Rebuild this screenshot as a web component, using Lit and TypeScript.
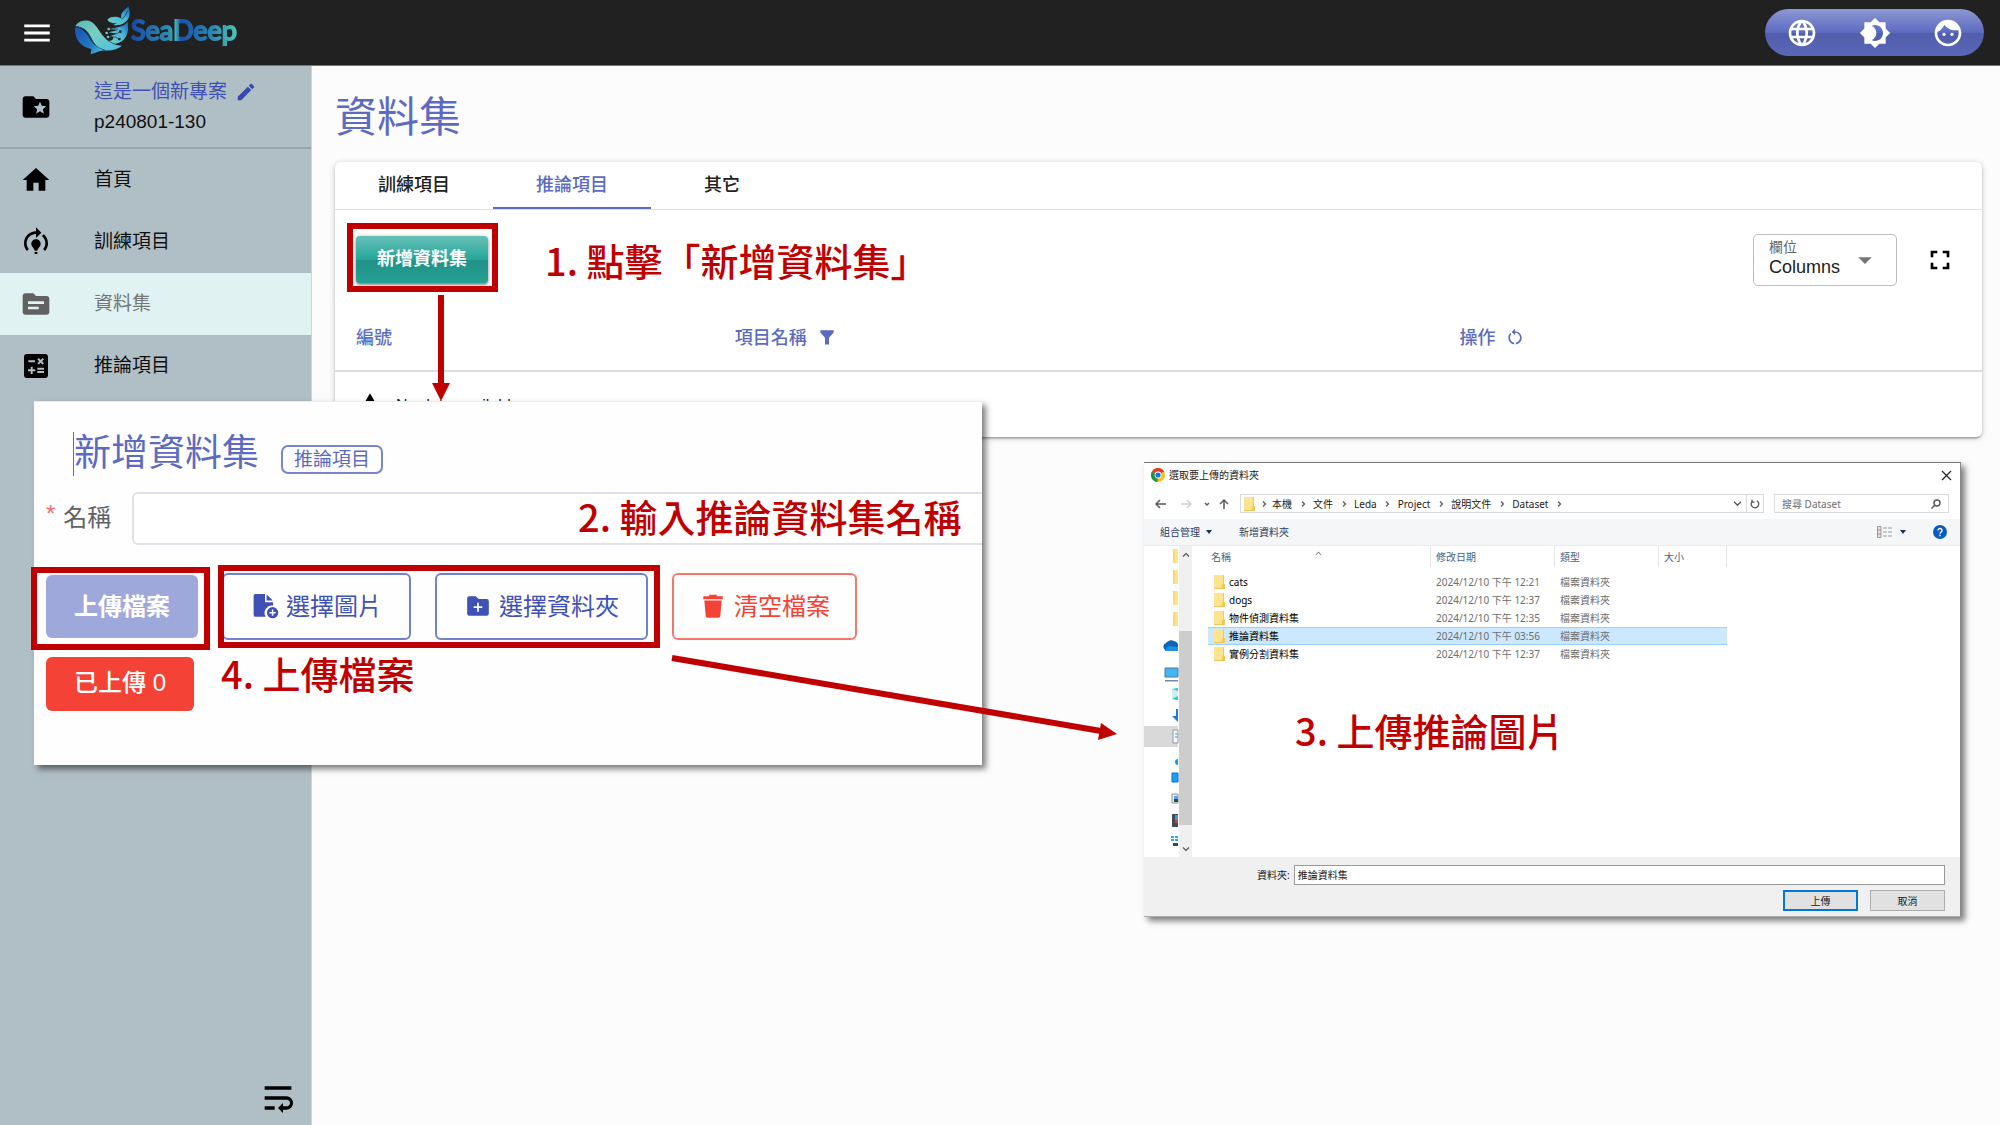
import { LitElement, html, css, svg } from "lit";
import { customElement, property } from "lit/decorators.js";
import { classMap } from "lit/directives/class-map.js";

const ICONS: Record<string, string> = {
  menu: "M3 18h18v-2H3v2zm0-5h18v-2H3v2zm0-7v2h18V6H3z",
  language:
    "M11.99 2C6.47 2 2 6.48 2 12s4.47 10 9.99 10C17.52 22 22 17.52 22 12S17.52 2 11.99 2zm6.93 6h-2.95c-.32-1.25-.78-2.45-1.38-3.56 1.84.63 3.37 1.91 4.33 3.56zM12 4.04c.83 1.2 1.48 2.53 1.91 3.96h-3.82c.43-1.43 1.08-2.76 1.91-3.96zM4.26 14C4.1 13.36 4 12.69 4 12s.1-1.36.26-2h3.38c-.08.66-.14 1.32-.14 2 0 .68.06 1.34.14 2H4.26zm.82 2h2.95c.32 1.25.78 2.45 1.38 3.56-1.84-.63-3.37-1.9-4.33-3.56zm2.95-8H5.08c.96-1.66 2.49-2.93 4.33-3.56C8.81 5.55 8.35 6.75 8.03 8zM12 19.96c-.83-1.2-1.48-2.53-1.91-3.96h3.82c-.43 1.43-1.08 2.76-1.91 3.96zM14.34 14H9.66c-.09-.66-.16-1.32-.16-2 0-.68.07-1.35.16-2h4.68c.09.65.16 1.32.16 2 0 .68-.07 1.34-.16 2zm.25 5.56c.6-1.11 1.06-2.31 1.38-3.56h2.95c-.96 1.65-2.49 2.93-4.33 3.56zM16.36 14c.08-.66.14-1.32.14-2 0-.68-.06-1.34-.14-2h3.38c.16.64.26 1.31.26 2s-.1 1.36-.26 2h-3.38z",
  brightness:
    "M20 8.69V4h-4.69L12 .69 8.69 4H4v4.69L.69 12 4 15.31V20h4.69L12 23.31 15.31 20H20v-4.69L23.31 12 20 8.69zM12 18c-.89 0-1.74-.2-2.5-.55C11.56 16.5 13 14.42 13 12s-1.44-4.5-3.5-5.45C10.26 6.2 11.11 6 12 6c3.31 0 6 2.69 6 6s-2.69 6-6 6z",
  face: "M9 11.75c-.69 0-1.25.56-1.25 1.25s.56 1.25 1.25 1.25 1.25-.56 1.25-1.25-.56-1.25-1.25-1.25zm6 0c-.69 0-1.25.56-1.25 1.25s.56 1.25 1.25 1.25 1.25-.56 1.25-1.25-.56-1.25-1.25-1.25zM12 2C6.48 2 2 6.48 2 12s4.48 10 10 10 10-4.48 10-10S17.52 2 12 2zm0 18c-4.41 0-8-3.59-8-8 0-.29.02-.58.05-.86 2.36-1.05 4.23-2.98 5.21-5.37C11.07 8.33 14.05 10 17.42 10c.78 0 1.53-.09 2.25-.26.21.71.33 1.47.33 2.26 0 4.41-3.59 8-8 8z",
  folderStar:
    "M20 6h-8l-2-2H4c-1.1 0-1.99.9-1.99 2L2 18c0 1.1.9 2 2 2h16c1.1 0 2-.9 2-2V8c0-1.1-.9-2-2-2zm-2.06 11L15 15.28 12.06 17l.78-3.33-2.59-2.24 3.41-.29L15 8l1.34 3.14 3.41.29-2.59 2.24.78 3.33z",
  edit: "M3 17.25V21h3.75L17.81 9.94l-3.75-3.75L3 17.25zM20.71 7.04c.39-.39.39-1.02 0-1.41l-2.34-2.34c-.39-.39-1.02-.39-1.41 0l-1.83 1.83 3.75 3.75 1.83-1.83z",
  home: "M10 20v-6h4v6h5v-8h3L12 3 2 12h3v8z",
  training:
    "M15.5 13.5c0 2-2.5 3.5-2.5 5h-2c0-1.5-2.5-3-2.5-5 0-1.93 1.57-3.5 3.5-3.5s3.5 1.57 3.5 3.5zm-2.5 6h-2V21h2v-1.5zm6-6.5c0 1.68-.59 3.21-1.58 4.42l1.42 1.42C20.18 17.27 21 15.23 21 13c0-2.74-1.23-5.19-3.16-6.84l-1.42 1.42C17.99 8.86 19 10.82 19 13zm-3-8l-4-4v3c-4.97 0-9 4.03-9 9 0 2.23.82 4.27 2.16 5.84l1.42-1.42C5.59 16.21 5 14.68 5 13c0-3.86 3.14-7 7-7v3l4-4z",
  source:
    "M20 6h-8l-2-2H4C2.9 4 2.01 4.9 2.01 6L2 18c0 1.1.9 2 2 2h16c1.1 0 2-.9 2-2V8c0-1.1-.9-2-2-2zM14 16H6v-2h8v2zM18 12H6v-2h12v2z",
  calculate:
    "M19 3H5c-1.1 0-2 .9-2 2v14c0 1.1.9 2 2 2h14c1.1 0 2-.9 2-2V5c0-1.1-.9-2-2-2zm-5.97 4.06L14.09 6l1.41 1.41L16.91 6l1.06 1.06-1.41 1.41 1.41 1.41-1.06 1.06-1.41-1.4-1.41 1.41-1.06-1.06 1.41-1.41-1.41-1.42zm-6.78.66h5v1.5h-5v-1.5zM11.5 16h-2v2H8v-2H6v-1.5h2v-2h1.5v2h2V16zm6.5 1.25h-5v-1.5h5v1.5zm0-2.5h-5v-1.5h5v1.5z",
  wrap: "M4 19h6v-2H4v2zM20 5H4v2h16V5zm-3 6H4v2h13.25c1.1 0 2 .9 2 2s-.9 2-2 2H15v-2l-3 3 3 3v-2h2c2.21 0 4-1.79 4-4s-1.79-4-4-4z",
  fullscreen:
    "M7 14H5v5h5v-2H7v-3zm-2-4h2V7h3V5H5v5zm12 7h-3v2h5v-5h-2v3zM14 5v2h3v3h2V5h-5z",
  dropdown: "M7 10l5 5 5-5z",
  funnel: "M4 4h16v2.5l-5.6 6.5v8H9.600v-8L4 6.500z",
  restart:
    "M12 5V2L8 6l4 4V7c3.310 0 6 2.690 6 6 0 2.970-2.170 5.430-5 5.910v2.020c3.950-.490 7-3.850 7-7.930 0-4.420-3.580-8-8-8zM6 13c0-1.650.670-3.150 1.760-4.240L6.340 7.340C4.900 8.790 4 10.790 4 13c0 4.080 3.050 7.440 7 7.930v-2.020c-2.830-.480-5-2.940-5-5.910z",
  warning: "M1 21h22L12 2 1 21zm12-3h-2v-2h2v2zm0-4h-2v-4h2v4z",
  fileAdd:
    "M3 1h9v7.500h7.500v3A7 7 0 0 0 12.600 22H3.500A2 2 0 0 1 1.500 20V2.500A1.500 1.500 0 0 1 3 1zM13.500 1.300L19.200 7h-5.700zM19 13a5.200 5.200 0 1 0 0 10.400A5.200 5.200 0 0 0 19 13zm.700 2.300v2.200h2.200v1.400h-2.200v2.200h-1.400v-2.200h-2.200v-1.400h2.200v-2.200z",
  folderAdd:
    "M4 3h6l2.500 2.500H20a2 2 0 0 1 2 2V19a2 2 0 0 1-2 2H4a2 2 0 0 1-2-2V5a2 2 0 0 1 2-2zm7.200 6v3.300H8v1.600h3.200v3.300h1.600v-3.300H16v-1.600h-3.200V9z",
  trash:
    "M8.500 1.500h7V3H21v2.800H3V3h5.500zM4 7h16l-1.300 14.500a1.500 1.500 0 0 1-1.500 1.300H6.800a1.500 1.500 0 0 1-1.500-1.300z",
};

const baseStyles = css`
  * {
    box-sizing: border-box;
  }
  button,
  input,
  select {
    font: inherit;
    color: inherit;
    margin: 0;
  }
  button {
    cursor: pointer;
    border: 0;
    background: none;
    padding: 0;
  }
  a {
    color: inherit;
    text-decoration: none;
  }
  h1,
  h2,
  p,
  ul {
    margin: 0;
    padding: 0;
    font-weight: 400;
    list-style: none;
  }
`;

@customElement("ui-icon")
export class UiIcon extends LitElement {
  static styles = css`
    :host {
      display: inline-flex;
      flex: none;
      width: 32px;
      height: 32px;
    }
    svg {
      width: 100%;
      height: 100%;
      fill: currentColor;
    }
  `;
  @property() name = "";
  render() {
    return html`<svg viewBox="0 0 24 24" aria-hidden="true">
      <path fill-rule="evenodd" d=${ICONS[this.name] ?? ""}></path>
    </svg>`;
  }
}

@customElement("brand-logo")
export class BrandLogo extends LitElement {
  static styles = css`
    :host {
      display: flex;
      align-items: center;
      padding-bottom: 6px;
    }
    .whale {
      width: 57px;
      height: 50px;
    }
    .word {
      font: 400 27px/36px Lato, sans-serif;
      -webkit-text-stroke: 2px transparent;
      color: transparent;
      background: linear-gradient(90deg, #1848a8, #2f8fb0 36%, #45b3b4 42%, #1a50ac 47%, #2587b4 75%, #4fc4b4);
      -webkit-background-clip: text;
      background-clip: text;
    }
  `;
  render() {
    return html`
      <svg class="whale" viewBox="42 12 171 150" aria-hidden="true">
        <defs>
          <linearGradient id="deep" x1="0" y1="0" x2="1" y2="1">
            <stop offset="0" stop-color="#1d4fae"></stop>
            <stop offset=".6" stop-color="#1f7cc4"></stop>
            <stop offset="1" stop-color="#55c8e8"></stop>
          </linearGradient>
          <linearGradient id="foam" x1="0" y1="0" x2="1" y2="1">
            <stop offset="0" stop-color="#58b5b8"></stop>
            <stop offset=".4" stop-color="#79cfc0"></stop>
            <stop offset="1" stop-color="#45bfe4"></stop>
          </linearGradient>
          <linearGradient id="tail" x1="0" y1="1" x2="1" y2="0">
            <stop offset="0" stop-color="#7ad0c2"></stop>
            <stop offset=".6" stop-color="#41b6dc"></stop>
            <stop offset="1" stop-color="#1c55ad"></stop>
          </linearGradient>
        </defs>
        <path fill="url(#deep)" d="M45 80C60 78 76 90 88 110C98 128 110 142 134 147C122 150 112 152 106 155L92 160L94 144C60 136 43 112 45 80Z"></path>
        <path fill="url(#foam)" d="M46 76C54 60 78 54 95 63C112 74 120 98 140 116C154 128 170 133 186 134C170 148 142 153 120 144C100 134 98 110 82 92C72 80 58 76 46 76Z"></path>
        <path fill="none" stroke="#1d4f80" stroke-width="2.500" d="M46 78C70 77 82 92 92 112C102 130 114 142 134 147"></path>
        <path fill="url(#tail)" d="M203 62C208 92 200 122 166 128C158 126 152 123 147 119C156 120 160 116 160 108L150 106L170 98L146 94L172 88L150 84L176 78C188 76 196 70 203 62Z"></path>
        <path fill="url(#tail)" d="M142 56C154 44 174 47 184 52C180 36 194 28 205 16C213 36 210 56 192 66C184 72 170 74 160 72L172 66C158 68 146 64 142 56Z"></path>
        <path fill="none" stroke="#212121" stroke-width="2" d="M184 54C192 50 198 42 202 30M150 98h22l8-8M144 108h24l8 6M158 84h16"></path>
        <g fill="#6acbc4">
          <circle cx="146" cy="84" r="4"></circle>
          <circle cx="140" cy="96" r="4"></circle>
          <circle cx="144" cy="108" r="4"></circle>
        </g>
        <g fill="#212121">
          <circle cx="181" cy="92" r="4"></circle>
          <circle cx="178" cy="114" r="4"></circle>
        </g>
      </svg>
      <span class="word">SeaDeep</span>
    `;
  }
}

@customElement("side-nav")
export class SideNav extends LitElement {
  static styles = [
    baseStyles,
    css`
      :host {
        display: flex;
        flex-direction: column;
        background: #b0bec5;
        border-right: 1px solid #cfd6da;
        font-size: 19px;
        color: #111;
      }
      .row {
        display: flex;
        align-items: center;
        gap: 42px;
        padding-left: 20px;
        height: 62px;
      }
      .row ui-icon {
        color: #000;
      }
      .label {
        padding-bottom: 5px;
      }
      .project {
        height: 83px;
        border-bottom: 2px solid #98a4aa;
      }
      .project .lines {
        line-height: 30px;
      }
      .name {
        display: flex;
        align-items: center;
        gap: 8px;
        color: #3f51b5;
      }
      .name button {
        display: flex;
      }
      .name ui-icon {
        width: 22px;
        height: 22px;
        color: #3949ab;
      }
      .active {
        background: #e0f2f1;
        color: #757575;
      }
      .active ui-icon {
        color: #616161;
      }
      .foot {
        margin-top: auto;
        display: flex;
        justify-content: flex-end;
        padding: 7px 13px;
      }
      .foot button {
        display: flex;
      }
      .foot ui-icon {
        width: 40px;
        height: 40px;
        color: #000;
      }
    `,
  ];
  private items = [
    { icon: "home", label: "首頁" },
    { icon: "training", label: "訓練項目" },
    { icon: "source", label: "資料集", active: true },
    { icon: "calculate", label: "推論項目" },
  ];
  render() {
    return html`
      <div class="row project">
        <ui-icon name="folderStar"></ui-icon>
        <div class="lines">
          <div class="name">
            <span>這是一個新專案</span>
            <button type="button" aria-label="編輯"><ui-icon name="edit"></ui-icon></button>
          </div>
          <div>p240801-130</div>
        </div>
      </div>
      <nav>
        <ul>
          ${this.items.map(
            (i) => html`<li>
              <a href="#" class=${classMap({ row: true, active: !!i.active })}>
                <ui-icon name=${i.icon}></ui-icon><span class="label">${i.label}</span>
              </a>
            </li>`
          )}
        </ul>
      </nav>
      <div class="foot">
        <button type="button" aria-label="收合選單"><ui-icon name="wrap"></ui-icon></button>
      </div>
    `;
  }
}

@customElement("dataset-card")
export class DatasetCard extends LitElement {
  static styles = [
    baseStyles,
    css`
      :host {
        display: block;
        background: #fff;
        border-radius: 6px;
        box-shadow: 0 1px 6px rgba(0, 0, 0, 0.2), 0 2px 2px rgba(0, 0, 0, 0.18),
          0 3px 1px -2px rgba(0, 0, 0, 0.12);
        font-size: 18px;
      }
      .tabs {
        display: flex;
        height: 48px;
        border-bottom: 1px solid #e0e0e0;
      }
      .tab {
        min-width: 142px;
        padding: 0 43px 4px;
        font-weight: 500;
        color: #212121;
        border-bottom: 2px solid transparent;
      }
      .tab.on {
        color: #5c6bc0;
        border-color: #5c6bc0;
      }
      .tools {
        display: flex;
        align-items: center;
        justify-content: space-between;
        padding: 24px 26px 20px 21px;
      }
      .add {
        height: 47px;
        margin-bottom: 2px;
        padding: 0 21px 5px;
        border-radius: 4px;
        color: #fff;
        font-weight: 700;
        background: linear-gradient(
            to bottom,
            rgba(255, 255, 255, 0.3),
            rgba(255, 255, 255, 0) 50%,
            rgba(0, 0, 0, 0.12) 51%,
            rgba(0, 0, 0, 0.04)
          ),
          #26a69a;
        box-shadow: 0 1px 5px rgba(0, 0, 0, 0.3), 0 2px 2px rgba(0, 0, 0, 0.3);
      }
      .right {
        display: flex;
        align-items: center;
        gap: 27px;
      }
      .picker {
        position: relative;
        display: flex;
        flex-direction: column;
        width: 144px;
        height: 52px;
        padding: 2px 15px;
        border: 1px solid #bdbdbd;
        border-radius: 5px;
      }
      .picker span {
        font-size: 14px;
        line-height: 20px;
        color: #666;
      }
      .picker select {
        appearance: none;
        border: 0;
        padding: 0;
        background: none;
        line-height: 20px;
        color: #212121;
      }
      .picker ui-icon {
        position: absolute;
        right: 15px;
        top: 9px;
        color: #757575;
        pointer-events: none;
      }
      .full {
        display: flex;
      }
      table {
        width: 100%;
        border-collapse: collapse;
        table-layout: fixed;
      }
      th {
        height: 65px;
        padding: 0 21px 4px;
        text-align: left;
        font-weight: 500;
        color: #5c6bc0;
        border-bottom: 2px solid #dcdcdc;
      }
      .c1 {
        width: 23%;
      }
      .c2 {
        width: 44%;
      }
      .head {
        display: flex;
        align-items: center;
        gap: 9px;
      }
      .head ui-icon {
        width: 22px;
        height: 22px;
        padding-top: 2px;
      }
      td {
        height: 66px;
        padding: 0 21px;
        font-size: 16px;
        color: #212121;
      }
      .empty {
        display: flex;
        align-items: center;
        gap: 12px;
      }
      .empty span {
        padding-top: 3px;
      }
      .empty ui-icon {
        width: 28px;
        height: 28px;
        color: #000;
      }
    `,
  ];
  render() {
    return html`
      <div class="tabs" role="tablist">
        <button type="button" role="tab" class="tab">訓練項目</button>
        <button type="button" role="tab" class="tab on" aria-selected="true">推論項目</button>
        <button type="button" role="tab" class="tab">其它</button>
      </div>
      <div class="tools">
        <button type="button" class="add">新增資料集</button>
        <div class="right">
          <label class="picker">
            <span>欄位</span>
            <select>
              <option>Columns</option>
            </select>
            <ui-icon name="dropdown"></ui-icon>
          </label>
          <button type="button" class="full" aria-label="全螢幕">
            <ui-icon name="fullscreen"></ui-icon>
          </button>
        </div>
      </div>
      <table>
        <thead>
          <tr>
            <th class="c1">編號</th>
            <th class="c2"><span class="head">項目名稱<ui-icon name="funnel"></ui-icon></span></th>
            <th><span class="head">操作<ui-icon name="restart"></ui-icon></span></th>
          </tr>
        </thead>
        <tbody>
          <tr>
            <td colspan="3">
              <div class="empty"><ui-icon name="warning"></ui-icon><span>No data available</span></div>
            </td>
          </tr>
        </tbody>
      </table>
    `;
  }
}

@customElement("new-dataset-panel")
export class NewDatasetPanel extends LitElement {
  static styles = [
    baseStyles,
    css`
      :host {
        display: flex;
        flex-direction: column;
        align-items: stretch;
        overflow: hidden;
        padding: 30px 0 54px 12px;
        background: #fefefe;
        border-top: 1px solid #ececec;
        font-size: 24px;
      }
      .title {
        display: flex;
        align-items: center;
        gap: 22px;
        padding-left: 27px;
      }
      h2 {
        font-size: 37px;
        line-height: 44px;
        color: #5c6bc0;
        border-left: 1px solid #5c6bc0;
      }
      .chip {
        margin-top: 10px;
        padding: 0 11px;
        border: 2px solid #7985cb;
        border-radius: 7px;
        font-size: 19px;
        line-height: 25px;
        color: #5c6bc0;
      }
      .field {
        display: flex;
        align-items: center;
        margin-top: 16px;
        color: #606266;
      }
      .field label {
        display: flex;
        gap: 8px;
        width: 86px;
        padding-bottom: 7px;
      }
      .star {
        padding-top: 2px;
        color: #f56c6c;
      }
      .field input {
        flex: 1;
        height: 53px;
        margin-right: -8px;
        padding: 0 16px;
        border: 2px solid #dfe2e9;
        border-radius: 6px;
        background: #fff;
      }
      .actions {
        display: flex;
        align-items: center;
        gap: 24px;
        margin-top: 28px;
      }
      .btn {
        display: flex;
        align-items: center;
        justify-content: center;
        gap: 7px;
        height: 67px;
        padding: 0 27px 4px;
        border: 2px solid #7380ca;
        border-radius: 6px;
        color: #3f51b5;
      }
      .btn ui-icon {
        width: 28px;
        height: 28px;
        padding-top: 2px;
      }
      .upload {
        height: 63px;
        padding: 0 28px 4px;
        border: 0;
        font-weight: 700;
        color: #fff;
        background: #9fa8da;
      }
      .clear {
        padding: 0 25px 4px;
        color: #f44336;
        border-color: #f5766d;
      }
      .done {
        align-self: flex-start;
        margin-top: 17px;
        padding: 8px 28px 10px;
        border-radius: 6px;
        font-weight: 500;
        line-height: 36px;
        color: #fff;
        background: #f44336;
      }
    `,
  ];
  render() {
    return html`
      <div class="title">
        <h2>新增資料集</h2>
        <span class="chip">推論項目</span>
      </div>
      <div class="field">
        <label for="name"><span class="star">*</span>名稱</label>
        <input id="name" type="text" />
      </div>
      <div class="actions">
        <button type="button" class="btn upload">上傳檔案</button>
        <button type="button" class="btn"><ui-icon name="fileAdd"></ui-icon>選擇圖片</button>
        <button type="button" class="btn"><ui-icon name="folderAdd"></ui-icon>選擇資料夾</button>
        <button type="button" class="btn clear"><ui-icon name="trash"></ui-icon>清空檔案</button>
      </div>
      <div class="done">已上傳 0</div>
    `;
  }
}

@customElement("folder-dialog")
export class FolderDialog extends LitElement {
  static styles = [
    baseStyles,
    css`
      :host {
        display: flex;
        flex-direction: column;
        background: #fff;
        border-top: 1px solid #777;
        border-right: 1px solid #888;
        border-bottom: 1px solid #aaa;
        font: 10px/14px "Noto Sans", "Noto Sans CJK TC", sans-serif;
        color: #1a1a1a;
      }
      svg {
        display: block;
        flex: none;
      }
      .bar {
        display: flex;
        align-items: center;
        gap: 4px;
        padding: 5px 8px 6px 7px;
      }
      .bar button {
        margin-left: auto;
      }
      .nav {
        display: flex;
        align-items: stretch;
        gap: 10px;
        padding: 6px 11px 6px 10px;
      }
      .arrows {
        display: flex;
        align-items: center;
      }
      .path {
        flex: 1;
        display: flex;
        align-items: center;
        height: 19px;
        margin-left: -4px;
        padding-left: 2px;
        border: 1px solid #d9d9d9;
      }
      .sep {
        width: 21px;
        display: flex;
        justify-content: center;
      }
      .root {
        width: 17px;
      }
      .tail {
        margin-left: auto;
        display: flex;
        align-items: center;
        align-self: stretch;
      }
      .tail button {
        height: 100%;
        width: 17px;
        display: flex;
        align-items: center;
        justify-content: center;
      }
      .tail button + button {
        border-left: 1px solid #d9d9d9;
      }
      .search {
        display: flex;
        align-items: center;
        width: 175px;
        padding: 0 7px;
        border: 1px solid #d9d9d9;
      }
      .search input {
        flex: 1;
        min-width: 0;
        padding: 0;
        border: 0;
        outline: 0;
        background: none;
      }
      .search input::placeholder {
        color: #6d6d6d;
      }
      .tools {
        display: flex;
        align-items: center;
        height: 27px;
        padding: 0 13px 0 16px;
        background: #f5f6f7;
        border-bottom: 1px solid #e8eaec;
        color: #2b3f63;
      }
      .tools .org {
        display: flex;
        align-items: center;
        gap: 6px;
        margin-right: 27px;
      }
      .tools .view {
        margin-left: auto;
        display: flex;
        align-items: center;
        gap: 8px;
        margin-right: 27px;
      }
      .body {
        display: flex;
      }
      .scroll {
        display: flex;
        flex-direction: column;
        align-items: center;
        width: 13px;
        background: #f0f0f0;
      }
      .up {
        height: 85px;
        padding-top: 5px;
      }
      .thumb {
        flex: 1;
        width: 100%;
        background: #cdcdcd;
      }
      .down {
        height: 32px;
        padding-top: 20px;
      }
      table {
        align-self: flex-start;
        margin-left: 16px;
        border-collapse: separate;
        border-spacing: 0;
        table-layout: fixed;
        width: 519px;
      }
      th {
        height: 21px;
        padding: 0 0 0 5px;
        text-align: left;
        font-weight: 400;
        color: #4c607a;
        border-right: 1px solid #e5e5e5;
      }
      th:first-child {
        padding-left: 3px;
      }
      .name {
        width: 223px;
      }
      .date {
        width: 124px;
      }
      .type {
        width: 104px;
      }
      .sorted {
        display: flex;
        align-items: flex-start;
      }
      .sorted svg {
        margin-left: 84px;
      }
      .gap td {
        height: 6px;
      }
      td {
        height: 18px;
        padding: 0 0 0 5px;
        color: #6d6d6d;
      }
      .file {
        display: flex;
        align-items: center;
        gap: 4px;
        color: #000;
      }
      .sel td {
        background: #cce8ff;
        box-shadow: inset 0 1px #99d1ff, inset 0 -1px #99d1ff;
      }
      .foot {
        padding: 8px 15px 5px 113px;
        background: #f0f0f0;
      }
      .dest {
        display: flex;
        align-items: center;
        gap: 4px;
      }
      .dest input {
        flex: 1;
        height: 20px;
        padding: 0 3px 2px;
        border: 1px solid #999;
        background: #fff;
      }
      .btns {
        display: flex;
        justify-content: flex-end;
        gap: 12px;
        padding-top: 5px;
      }
      .btns button {
        width: 75px;
        height: 21px;
        background: #e1e1e1;
        border: 1px solid #adadad;
      }
      .btns .ok {
        border: 2px solid #0078d7;
      }
    `,
  ];
  private crumbs = ["本機", "文件", "Leda", "Project", "說明文件", "Dataset"];
  private files = [
    ["cats", "2024/12/10 下午 12:21"],
    ["dogs", "2024/12/10 下午 12:37"],
    ["物件偵測資料集", "2024/12/10 下午 12:35"],
    ["推論資料集", "2024/12/10 下午 03:56"],
    ["實例分割資料集", "2024/12/10 下午 12:37"],
  ];
  private folder() {
    return html`<svg width="12" height="14" viewBox="0 0 12 14" aria-hidden="true">
      <rect x="1" width="10" height="14" fill="#ffe48f"></rect>
      <path d="M10 0h1v9h1v5H9V9h1z" fill="#f3c94f"></path>
      <path d="M1 13h10v1H1z" fill="#ecc65c"></path>
    </svg>`;
  }
  private chevron(d: string, size = 8, color = "#555") {
    return html`<svg width=${size} height=${size} viewBox="0 0 8 8" aria-hidden="true">
      <path d=${d} fill="none" stroke=${color} stroke-width="1.200"></path>
    </svg>`;
  }
  private caret() {
    return html`<svg width="6" height="4" viewBox="0 0 6 4" aria-hidden="true">
      <path d="M0 0h6L3 4z" fill="#17305c"></path>
    </svg>`;
  }
  private tree() {
    return html`<svg width="35" height="311" viewBox="0 0 35 311" aria-hidden="true">
      ${[3, 24, 45, 66].map(
        (y) => svg`<path d="M29 ${y}h5v14h-5z" fill="#ffe48f"></path><path d="M29 ${y}h2v14h-2z" fill="#f9d775"></path>`
      )}
      <path d="M21 104a4 4 0 0 1 1-7 6 6 0 0 1 8-2 5 5 0 0 1 4 3v7H22z" fill="#0a64b8"></path>
      <path d="M22 105a4 4 0 0 1 4-5l8 1v4z" fill="#1e90e0"></path>
      <path d="M21 122h13v9H21z" fill="#3db8f5" stroke="#5b7690"></path>
      <path d="M21 134h13v1.500H21z" fill="#7088a8"></path>
      <path d="M28 143l6-1v12l-6-1z" fill="#c9f1f1"></path>
      <path d="M28 143l6-1v3zM28 153l6-3v4z" fill="#31c4cc"></path>
      <path d="M32 163h2v13l-6-6h4z" fill="#1f7bd8"></path>
      <path d="M0 180h34v21H0z" fill="#d9d9d9"></path>
      <path d="M29 184h5v13h-5z" fill="#f5f8fa" stroke="#8a99a5"></path>
      <path d="M31 188h3M31 191h3" stroke="#3c9be0"></path>
      <path d="M34 213a3 3 0 1 0 0 6z" fill="#0a9bf0"></path>
      <path d="M28 227h6v9h-6z" fill="#1aa0f5" stroke="#0a70c0"></path>
      <path d="M28 248h6v9h-6z" fill="#e8f1f7" stroke="#909090"></path>
      <path d="M30 250h4v3h-4z" fill="#58a5e8"></path>
      <path d="M30 253h4v3h-4z" fill="#1c4d55"></path>
      <path d="M28 268h6v13h-6z" fill="#444b55"></path>
      <path d="M31 269h3v5h-3z" fill="#4c8fe8"></path>
      <path d="M31 274h3v3h-3z" fill="#c14545"></path>
      <path d="M27 290h3v2h-3zM31 290h3v2h-3zM27 293h3v2h-3zM31 293h3v2h-3z" fill="#16b5e8"></path>
      <path d="M29 297h5v3h-5z" fill="#444"></path>
    </svg>`;
  }
  render() {
    const right = "M3 1.500l2.500 2.500L3 6.500";
    const down = "M1 2.500l3 3 3-3";
    const up = "M1 5.500l3-3 3 3";
    return html`
      <div class="bar">
        <svg width="14" height="14" viewBox="0 0 14 14" aria-hidden="true">
          <circle cx="7" cy="7" r="7" fill="#fbc116"></circle>
          <path d="M7 7L.9 3.500A7 7 0 0 1 13.100 3.500z" fill="#e33b2e"></path>
          <path d="M7 7L.9 3.500A7 7 0 0 0 6.500 14z" fill="#229342"></path>
          <circle cx="7" cy="7" r="3.400" fill="#fff"></circle>
          <circle cx="7" cy="7" r="2.600" fill="#1a73e8"></circle>
        </svg>
        <span>選取要上傳的資料夾</span>
        <button type="button" aria-label="關閉">
          <svg width="11" height="11" viewBox="0 0 11 11" aria-hidden="true">
            <path d="M1 1l9 9M10 1l-9 9" stroke="#222" stroke-width="1.200"></path>
          </svg>
        </button>
      </div>
      <div class="nav">
        <div class="arrows">
          <svg width="80" height="12" viewBox="0 0 80 12" aria-hidden="true" fill="none" stroke="#5a5a5a" stroke-width="1.500">
            <path d="M12 6H2M6 2L2 6l4 4"></path>
            <path d="M27 6h10M33 2l4 4-4 4" stroke="#d0d0d0"></path>
            <path d="M51 5l2 2 2-2"></path>
            <path d="M70 11V2M66 6l4-4 4 4"></path>
          </svg>
        </div>
        <div class="path">
          ${this.folder()}
          <span class="sep root">${this.chevron(right)}</span>
          ${this.crumbs.map(
            (c) => html`<a href="#">${c}</a><span class="sep">${this.chevron(right)}</span>`
          )}
          <span class="tail">
            <button type="button" aria-label="展開">${this.chevron(down, 9)}</button>
            <button type="button" aria-label="重新整理">
              <svg width="10" height="10" viewBox="0 0 10 10" aria-hidden="true" fill="none" stroke="#555" stroke-width="1.300">
                <path d="M7 1.800A3.800 3.800 0 1 1 2.600 2M2 .8v2.400h2.600"></path>
              </svg>
            </button>
          </span>
        </div>
        <label class="search">
          <input type="text" placeholder="搜尋 Dataset" aria-label="搜尋 Dataset" />
          <svg width="10" height="10" viewBox="0 0 10 10" aria-hidden="true" fill="none" stroke="#555" stroke-width="1.400">
            <circle cx="6" cy="4" r="3"></circle>
            <path d="M4 6L.5 9.500"></path>
          </svg>
        </label>
      </div>
      <div class="tools">
        <button type="button" class="org">組合管理 ${this.caret()}</button>
        <button type="button">新增資料夾</button>
        <button type="button" class="view" aria-label="檢視">
          <svg width="15" height="12" viewBox="0 0 15 12" aria-hidden="true">
            <path d="M.5 .5h3.500v11H.5zM.5 4h3.500M.5 8h3.500" fill="#f0dede" stroke="#999"></path>
            <path d="M6 2h4M11 2h4M6 6h4M11 6h4M6 10h4M11 10h4" stroke="#999"></path>
          </svg>
          ${this.caret()}
        </button>
        <svg width="14" height="14" viewBox="0 0 14 14" role="img" aria-label="說明">
          <circle cx="7" cy="7" r="7" fill="#0a5cc0"></circle>
          <path d="M5 5.500a2 2 0 1 1 3 1.700q-1 .6-1 1.600M7 9.800v1.400" fill="none" stroke="#fff" stroke-width="1.400"></path>
        </svg>
      </div>
      <div class="body">
        ${this.tree()}
        <div class="scroll">
          <div class="up">${this.chevron(up)}</div>
          <div class="thumb"></div>
          <div class="down">${this.chevron(down)}</div>
        </div>
        <table>
          <thead>
            <tr>
              <th class="name"><span class="sorted">名稱${this.chevron(up, 7, "#888")}</span></th>
              <th class="date">修改日期</th>
              <th class="type">類型</th>
              <th>大小</th>
            </tr>
          </thead>
          <tbody>
            <tr class="gap"><td colspan="4"></td></tr>
            ${this.files.map(
              ([name, date]) => html`<tr class=${classMap({ sel: name === "推論資料集" })}>
                <td><span class="file">${this.folder()}${name}</span></td>
                <td>${date}</td>
                <td>檔案資料夾</td>
                <td></td>
              </tr>`
            )}
          </tbody>
        </table>
      </div>
      <div class="foot">
        <div class="dest">
          <label for="dest">資料夾:</label>
          <input id="dest" type="text" .value=${"推論資料集"} />
        </div>
        <div class="btns">
          <button type="button" class="ok">上傳</button>
          <button type="button">取消</button>
        </div>
      </div>
    `;
  }
}

@customElement("app-root")
export class AppRoot extends LitElement {
  static styles = [
    baseStyles,
    css`
      :host {
        position: relative;
        display: grid;
        grid-template: auto 1fr / 312px 1fr;
        min-height: 100vh;
        overflow: hidden;
        background: #fcfcfc;
        font-family: "Liberation Sans", "Noto Sans CJK TC", sans-serif;
      }
      header {
        grid-column: 1 / -1;
        display: flex;
        align-items: center;
        gap: 20px;
        height: 66px;
        padding: 0 16px 0 20px;
        background: #212121;
        border-bottom: 1px solid #777;
        color: #fff;
      }
      .burger {
        display: flex;
      }
      .burger ui-icon {
        width: 34px;
        height: 34px;
      }
      .pill {
        margin-left: auto;
        display: flex;
        height: 47px;
        border-radius: 24px;
        background: linear-gradient(
            to bottom,
            rgba(255, 255, 255, 0.3),
            rgba(255, 255, 255, 0) 50%,
            rgba(0, 0, 0, 0.12) 51%,
            rgba(0, 0, 0, 0.04)
          ),
          #5c6bc0;
      }
      .pill button {
        width: 73px;
        display: flex;
        align-items: center;
        justify-content: center;
      }
      main {
        padding: 27px 18px 24px 23px;
      }
      h1 {
        font-size: 42px;
        line-height: 50px;
        margin-bottom: 19px;
        color: #5c6bc0;
      }
      .panel {
        position: absolute;
        left: 34px;
        top: 401px;
        width: 948px;
        box-shadow: 4px 4px 6px rgba(0, 0, 0, 0.5);
      }
      .dialog {
        position: absolute;
        left: 1144px;
        top: 462px;
        width: 817px;
        box-shadow: 4px 4px 6px rgba(0, 0, 0, 0.5);
      }
      .arrows {
        position: absolute;
        left: 0;
        top: 0;
        pointer-events: none;
        fill: #c00000;
        stroke: #c00000;
      }
      .box {
        position: absolute;
        border: 6px solid #c00000;
        pointer-events: none;
      }
      .box-add {
        left: 347px;
        top: 223px;
        width: 151px;
        height: 69px;
      }
      .box-upload {
        left: 31px;
        top: 567px;
        width: 179px;
        height: 83px;
      }
      .box-pick {
        left: 218px;
        top: 565px;
        width: 442px;
        height: 83px;
      }
      .note {
        position: absolute;
        white-space: nowrap;
        font: 500 38px/48px "Noto Sans CJK TC", sans-serif;
        color: #c00000;
      }
      .n1 {
        left: 545px;
        top: 236px;
      }
      .n2 {
        left: 578px;
        top: 492px;
      }
      .n3 {
        left: 1295px;
        top: 706px;
      }
      .n4 {
        left: 221px;
        top: 649px;
      }
    `,
  ];
  render() {
    return html`
      <header>
        <button type="button" class="burger" aria-label="選單"><ui-icon name="menu"></ui-icon></button>
        <brand-logo></brand-logo>
        <div class="pill">
          <button type="button" aria-label="語言"><ui-icon name="language"></ui-icon></button>
          <button type="button" aria-label="主題"><ui-icon name="brightness"></ui-icon></button>
          <button type="button" aria-label="帳號"><ui-icon name="face"></ui-icon></button>
        </div>
      </header>
      <side-nav></side-nav>
      <main>
        <h1>資料集</h1>
        <dataset-card></dataset-card>
      </main>
      <new-dataset-panel class="panel"></new-dataset-panel>
      <folder-dialog class="dialog"></folder-dialog>
      <div class="box box-add"></div>
      <div class="box box-upload"></div>
      <div class="box box-pick"></div>
      <svg class="arrows" width="1140" height="760" viewBox="0 0 1140 760" aria-hidden="true">
        <path d="M441 295V385" stroke-width="6"></path>
        <path d="M432 383h18l-9 18z" stroke="none"></path>
        <path d="M672 658L1101 731" stroke-width="6"></path>
        <path d="M1101 723L1117 734L1098 740z" stroke="none"></path>
      </svg>
      <p class="note n1">1. 點擊「新增資料集」</p>
      <p class="note n2">2. 輸入推論資料集名稱</p>
      <p class="note n3">3. 上傳推論圖片</p>
      <p class="note n4">4. 上傳檔案</p>
    `;
  }
}
